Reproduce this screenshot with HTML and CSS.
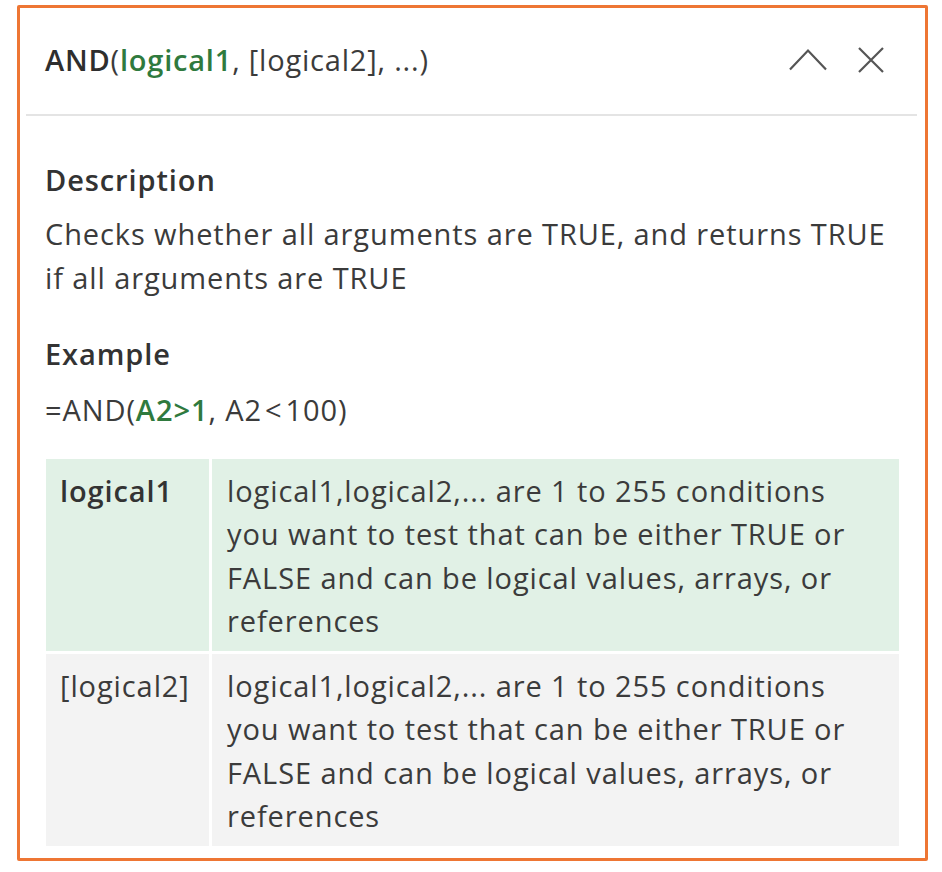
FILE: index.html
```html
<!DOCTYPE html>
<html lang="en">
<head>
    <meta charset="UTF-8">
    <title>AND function help</title>
    <link rel="stylesheet" href="styles.css">
</head>
<body>
    <div class="panel">
        <!-- Signature header -->
        <div class="header">
            <div class="signature"><span class="fn">AND</span>(<span class="arg-active">logical1</span>, [logical2], ...)</div>
            <div class="actions">
                <button class="icon-btn" title="Collapse">
                    <svg width="40" height="24" viewBox="0 0 40 24"><path d="M2 21.5 L20 2.5 L38 21.5" fill="none" stroke="#555" stroke-width="2.2"/></svg>
                </button>
                <button class="icon-btn" title="Close">
                    <svg width="28" height="28" viewBox="0 0 28 28"><path d="M2 2 L26 26 M26 2 L2 26" fill="none" stroke="#555" stroke-width="2.2"/></svg>
                </button>
            </div>
        </div>

        <div class="content">
            <h2>Description</h2>
            <p>Checks whether all arguments are TRUE, and returns TRUE if all arguments are TRUE</p>

            <h2>Example</h2>
            <p class="formula">=AND(<span class="arg-active">A2&gt;1</span>, A2<span class="op">&lt;</span>100)</p>

            <table class="args">
                <colgroup>
                    <col class="name-col">
                    <col>
                </colgroup>
                <tr class="active">
                    <td class="name">logical1</td>
                    <td>logical1,logical2,... are 1 to 255 conditions you want to test that can be either TRUE or FALSE and can be logical values, arrays, or references</td>
                </tr>
                <tr>
                    <td class="name">[logical2]</td>
                    <td>logical1,logical2,... are 1 to 255 conditions you want to test that can be either TRUE or FALSE and can be logical values, arrays, or references</td>
                </tr>
            </table>
        </div>
    </div>
</body>
</html>
```

FILE: styles.css
```css
body {
    margin: 0;
    font-family: "Open Sans", "Noto Sans", Arial, sans-serif;
    font-size: 29px;
    letter-spacing: 0.9px;
    color: #3b3b3b;
    background: #fff;
}
.panel {
    margin: 5px 0 0 17px;
    width: 905px;
    height: 850px;
    border: 3px solid #ee7634;
    border-radius: 2px;
}
.header {
    display: flex;
    justify-content: space-between;
    align-items: center;
    height: 106px;
    margin: 0 8px 0 6px;
    padding-left: 19px;
    border-bottom: 2px solid #e4e4e4;
}
.signature {
    padding-bottom: 4px;
    letter-spacing: 0.8px;
}
.signature .fn,
.signature .arg-active {
    font-weight: 600;
}
.signature .fn {
    color: #2e2e2e;
}
.arg-active {
    color: #2f7a3e;
}
.actions {
    display: flex;
    align-items: center;
    gap: 29px;
    padding-right: 32px;
    padding-bottom: 2px;
}
.icon-btn {
    border: none;
    background: none;
    padding: 0;
    cursor: pointer;
    display: block;
}
.icon-btn svg {
    display: block;
}
.content {
    padding: 46px 23px 0 25px;
}
h2 {
    font-size: 29px;
    font-weight: 600;
    color: #333;
    margin: 0 0 14px;
    line-height: 36px;
}
p {
    line-height: 43.5px;
    margin: 0 0 37px;
}
p.formula {
    margin: -12px 0 0;
    padding-top: 14px;
}
p.formula .arg-active {
    font-weight: 600;
}
p.formula .op {
    padding: 0 3px;
}
.args {
    width: 853px;
    table-layout: fixed;
    margin-left: 1px;
    margin-top: 27px;
    border-collapse: separate;
    border-spacing: 0;
    line-height: 43.5px;
}
.args .name-col {
    width: 166px;
}
.args td {
    vertical-align: top;
    padding: 10px 29px 8px 15px;
    background: #f3f3f3;
    border-bottom: 3px solid #fff;
}
.args td.name {
    padding: 10px 0 8px 14px;
    border-right: 3px solid #fff;
}
.args tr.active td {
    background: #e1f1e6;
}
.args tr.active td.name {
    font-weight: 600;
    color: #333;
}
```
